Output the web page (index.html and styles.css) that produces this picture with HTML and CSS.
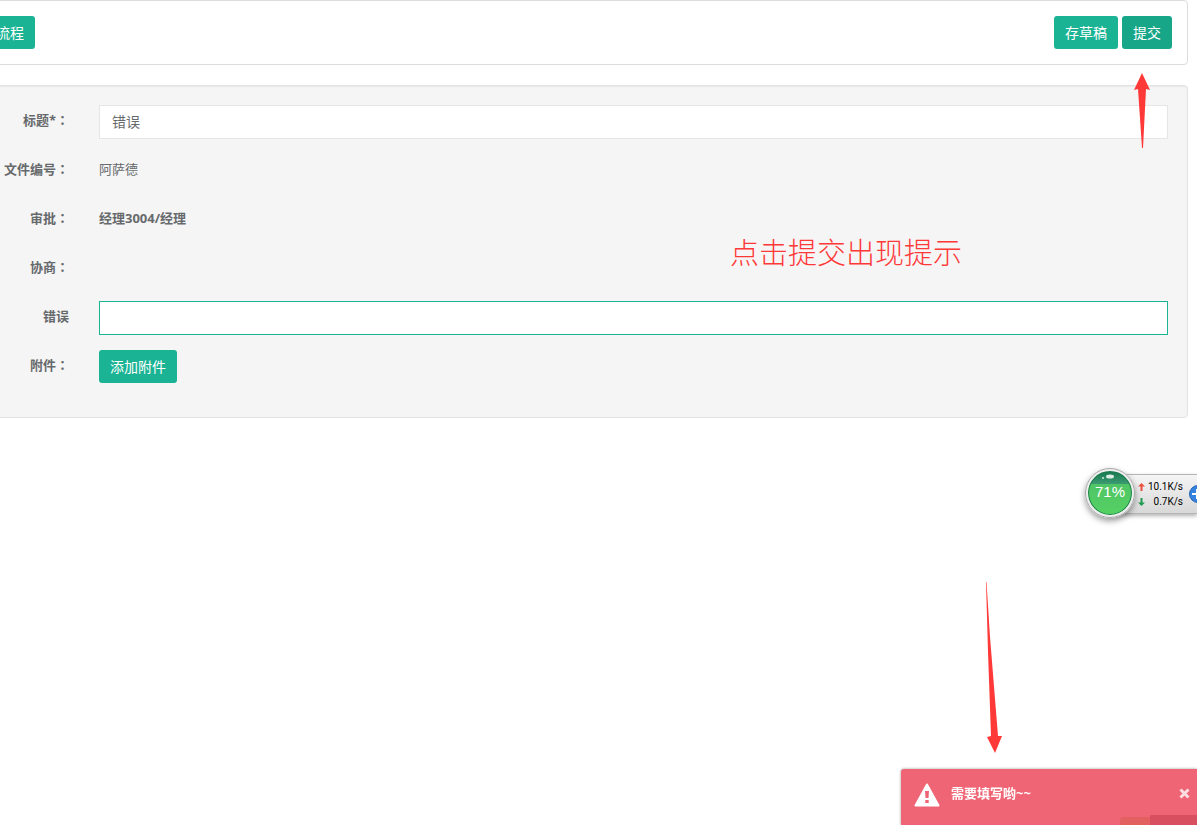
FILE: index.html
```html
<!DOCTYPE html>
<html lang="zh-CN">
<head>
    <meta charset="UTF-8">
    <meta name="viewport" content="width=device-width, initial-scale=1.0">
    <title>流程提交</title>
    <link rel="stylesheet" href="styles.css">
</head>
<body>
    <main class="wrapper">
        <div class="toolbar">
            <button type="button" class="btn">流程</button>
            <div class="toolbar-right">
                <button type="button" class="btn">存草稿</button>
                <button type="button" class="btn btn-active">提交</button>
            </div>
        </div>

        <form class="well">
            <div class="form-group">
                <label class="control-label" for="title">标题*<span class="colon" lang="zh-TW">：</span></label>
                <input class="form-control" type="text" id="title" value="错误">
            </div>
            <div class="form-group">
                <span class="control-label">文件编号<span class="colon" lang="zh-TW">：</span></span>
                <span class="form-text">阿萨德</span>
            </div>
            <div class="form-group">
                <span class="control-label">审批<span class="colon" lang="zh-TW">：</span></span>
                <span class="form-text form-text-bold">经理3004/经理</span>
            </div>
            <div class="form-group">
                <span class="control-label">协商<span class="colon" lang="zh-TW">：</span></span>
            </div>
            <div class="form-group">
                <label class="control-label" for="error">错误</label>
                <input class="form-control form-control-focus" type="text" id="error">
            </div>
            <div class="form-group">
                <span class="control-label">附件<span class="colon" lang="zh-TW">：</span></span>
                <button type="button" class="btn">添加附件</button>
            </div>
        </form>
    </main>

    <!-- notes over the page -->
    <p class="note">点击提交出现提示</p>
    <svg class="arrow arrow-up" width="18" height="78" viewBox="0 0 18 78">
        <path d="M9 1L17 18L13 17L10 76H9L5 17L1 18Z" fill="#ff3838"/>
    </svg>
    <svg class="arrow arrow-down" width="18" height="172" viewBox="0 0 18 172">
        <path d="M1 0H1.500L5 55L13 154L17 154L10 171L2 155L6 154L3 70Z" fill="#ff3838"/>
    </svg>

    <!-- network speed ball -->
    <div class="speed">
        <div class="speed-bar">
            <div class="speed-row">
                <svg width="7" height="8" viewBox="0 0 7 8"><path d="M3.500 0L7 3.500H4.500V8H2.500V3.500H0Z" fill="#e9513f"/></svg>
                <span>10.1K/s</span>
            </div>
            <div class="speed-row">
                <svg width="7" height="8" viewBox="0 0 7 8"><path d="M3.500 8L7 4.500H4.500V0H2.500V4.500H0Z" fill="#209c50"/></svg>
                <span>0.7K/s</span>
            </div>
        </div>
        <svg class="speed-plus" width="18" height="18" viewBox="0 0 18 18">
            <circle cx="9" cy="9" r="8.500" fill="#3583df" stroke="#2463b4"/>
            <path d="M3 9H15M8 4V14" stroke="#fff" stroke-width="2"/>
        </svg>
        <div class="speed-ball">
            <svg class="speed-shine" width="16" height="6" viewBox="0 0 16 6">
                <ellipse cx="9" cy="2.500" rx="4" ry="2" fill="#fff" opacity="0.85"/>
                <circle cx="2" cy="4" r="1" fill="#fff" opacity="0.8"/>
            </svg>
            <span class="speed-value">71%</span>
        </div>
    </div>

    <div class="toast" role="alert">
        <svg width="26" height="24" viewBox="0 0 26 24">
            <path d="M13 1.500L24.500 22.500H1.500Z" fill="#fff" stroke="#fff" stroke-width="2" stroke-linejoin="round"/>
            <path d="M11 8H15L14.500 15H11.500ZM11.300 17H14.700V20H11.300Z" fill="#ef6575"/>
        </svg>
        <strong class="toast-text">需要填写哟~~</strong>
        <button type="button" class="toast-close" aria-label="关闭">
            <svg width="11" height="11" viewBox="0 0 11 11"><path d="M1.500 1.500L9.500 9.500M9.500 1.500L1.500 9.500" stroke="#fcdde1" stroke-width="3"/></svg>
        </button>
        <div class="tray">
            <span class="tray-icon"></span>
            <span class="tray-text"></span>
        </div>
    </div>
</body>
</html>
```

FILE: styles.css
```css
body {
    margin: 0;
    background-color: #fff;
    color: #676a6c;
    font-family: "Open Sans", "Noto Sans CJK SC", sans-serif;
    font-size: 13px;
    line-height: 20px;
    overflow: hidden;
}

.wrapper {
    margin: 0 9px 0 -31px;
}

.toolbar {
    display: flex;
    justify-content: space-between;
    padding: 15px;
    margin-bottom: 20px;
    border: 1px solid #ddd;
    border-radius: 4px;
}

.toolbar-right {
    display: flex;
    gap: 4px;
}

.btn {
    box-sizing: border-box;
    height: 33px;
    padding: 0 11px;
    border: none;
    border-radius: 3px;
    background-color: #1ab394;
    color: #fff;
    font-family: inherit;
    font-size: 14px;
    line-height: 33px;
    cursor: pointer;
}

.btn-active {
    background-color: #18a689;
}

.well {
    padding: 19px 19px 18px;
    border: 1px solid #e3e3e3;
    border-radius: 4px;
    background-color: #f5f5f5;
    box-shadow: inset 0 1px 1px rgba(0, 0, 0, 0.05);
}

.form-group {
    display: flex;
    align-items: flex-start;
    height: 34px;
    margin-bottom: 15px;
}

.control-label {
    flex: 0 0 80px;
    margin-right: 30px;
    padding-top: 5px;
    font-weight: bold;
    text-align: right;
}

/* full width colon in the middle of its box */
.colon {
    font-family: "Noto Sans CJK TC", sans-serif;
    line-height: 1;
}

.form-text {
    padding-top: 5px;
}

.form-text-bold {
    font-weight: bold;
}

.form-control {
    box-sizing: border-box;
    flex: 1;
    min-width: 0;
    height: 34px;
    padding: 5px 12px 7px;
    border: 1px solid #e5e6e7;
    background-color: #fff;
    color: #676a6c;
    font-family: inherit;
    font-size: 14px;
}

.form-control-focus {
    border-color: #1ab394;
}

.note {
    position: absolute;
    top: 231px;
    right: 235px;
    margin: 0;
    color: #ff3838;
    font-family: "Noto Sans CJK SC", sans-serif;
    font-size: 29px;
    font-weight: 300;
    line-height: 40px;
}

.arrow {
    position: absolute;
}

.arrow-up {
    top: 72px;
    right: 46px;
}

.arrow-down {
    top: 582px;
    right: 194px;
}

.speed {
    position: absolute;
    top: 468px;
    right: 0;
    width: 112px;
    height: 50px;
}

.speed-bar {
    box-sizing: border-box;
    height: 40px;
    margin: 6px 0 0 25px;
    padding: 4px 14px 0 27px;
    border: 1px solid #b5b5b5;
    border-right: none;
    background: linear-gradient(#f5f5f5, #d8d8d8);
    box-shadow: 0 2px 4px rgba(0, 0, 0, 0.3);
}

.speed-row {
    display: flex;
    align-items: center;
    justify-content: space-between;
    color: #000;
    font-family: Roboto, sans-serif;
    font-size: 10px;
    line-height: 15px;
}

.speed-plus {
    position: absolute;
    top: 17px;
    right: -10px;
}

.speed-ball {
    position: absolute;
    top: 0;
    left: 0;
    box-sizing: border-box;
    width: 50px;
    height: 50px;
    border: 3px solid #eee;
    border-radius: 50%;
    outline: 1px solid #aaa;
    outline-offset: -1px;
    background: linear-gradient(#15774f 0, #3d9b72 30%, #4fc565 30%, #55d163 100%);
    box-shadow: inset 0 0 0 1px #1c7d4c, 0 3px 6px rgba(0, 0, 0, 0.4);
    color: #fff;
    text-align: center;
}

.speed-shine {
    position: absolute;
    top: 3px;
    left: 13px;
}

.speed-value {
    font-family: "Liberation Sans", sans-serif;
    font-size: 15px;
    line-height: 42px;
}

.toast {
    position: fixed;
    right: 0;
    bottom: 0;
    display: flex;
    align-items: flex-start;
    box-sizing: border-box;
    width: 296px;
    height: 56px;
    padding: 14px 7px 0 13px;
    border-radius: 3px 0 0 0;
    background-color: #ef6575;
    box-shadow: 0 0 3px rgba(0, 0, 0, 0.4);
    color: #fff;
}

.toast-text {
    flex: 1;
    margin-left: 11px;
}

.toast-close {
    padding: 0;
    margin-top: 5px;
    border: none;
    background: none;
    line-height: 0;
    cursor: pointer;
}

.tray {
    position: absolute;
    right: 0;
    bottom: 0;
    display: flex;
    align-items: flex-end;
}

.tray-icon {
    width: 30px;
    height: 8px;
    border-radius: 4px 0 0 0;
    background-color: #e2605f;
}

.tray-text {
    width: 47px;
    height: 10px;
    background-color: #d84f60;
}
```
